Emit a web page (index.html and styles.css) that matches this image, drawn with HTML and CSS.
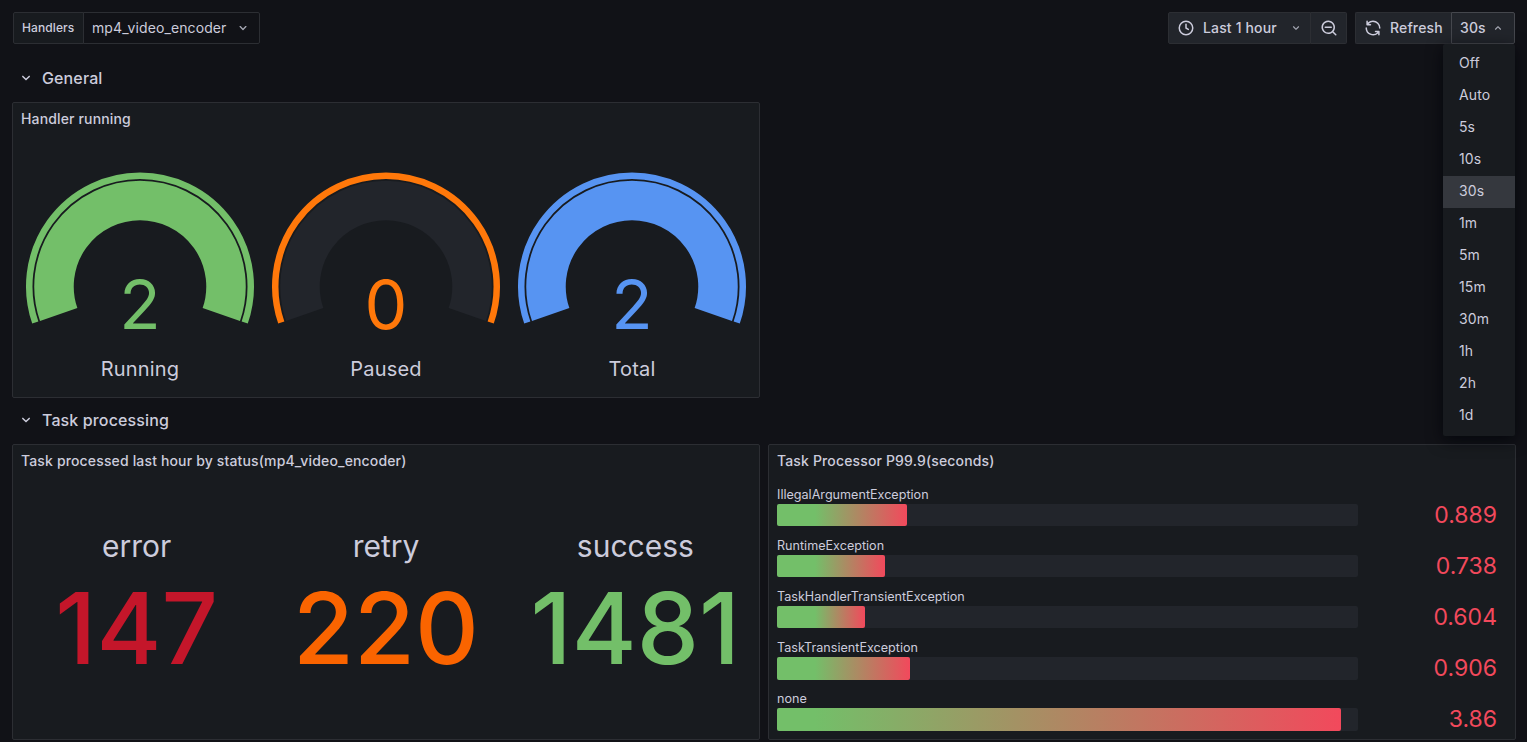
FILE: index.html
```html
<!DOCTYPE html>
<html lang="en">
<head>
<meta charset="utf-8">
<title>Handlers dashboard</title>
<link rel="stylesheet" href="styles.css">
</head>
<body>
<header class="toolbar">
  <div class="vars">
    <label class="var-label">Handlers</label>
    <div class="var-select"><span>mp4_video_encoder</span>
      <svg class="ic ic-chev ic-chev-lg" viewBox="0 0 24 24"><path d="M17,9.17a1,1,0,0,0-1.41,0L12,12.71,8.46,9.17a1,1,0,0,0-1.41,0,1,1,0,0,0,0,1.42l4.24,4.24a1,1,0,0,0,1.42,0L17,10.59A1,1,0,0,0,17,9.17Z"/></svg>
    </div>
  </div>
  <div class="actions">
    <div class="btn-group">
      <button class="btn btn-time">
        <svg class="ic" viewBox="0 0 24 24"><path d="M15.09814,12.63379,13,11.42285V7a1,1,0,0,0-2,0v5a1.00025,1.00025,0,0,0,.5.86621l3.09814,1.78809a1,1,0,0,0,1-1.73242ZM12,2A10,10,0,1,0,22,12,10.01146,10.01146,0,0,0,12,2Zm0,18a8,8,0,1,1,8-8A8.00931,8.00931,0,0,1,12,20Z"/></svg>
        <span>Last 1 hour</span>
        <svg class="ic ic-chev" viewBox="0 0 24 24"><path d="M17,9.17a1,1,0,0,0-1.41,0L12,12.71,8.46,9.17a1,1,0,0,0-1.41,0,1,1,0,0,0,0,1.42l4.24,4.24a1,1,0,0,0,1.42,0L17,10.59A1,1,0,0,0,17,9.17Z"/></svg>
      </button>
      <button class="btn btn-zoom" aria-label="Zoom out">
        <svg class="ic" viewBox="0 0 24 24"><path d="M21.71,20.29,18,16.61A9,9,0,1,0,16.61,18l3.68,3.68a1,1,0,0,0,1.42,0A1,1,0,0,0,21.71,20.29ZM11,18a7,7,0,1,1,7-7A7,7,0,0,1,11,18Zm4-8H7a1,1,0,0,0,0,2h8a1,1,0,0,0,0-2Z"/></svg>
      </button>
    </div>
    <div class="btn-group">
      <button class="btn btn-refresh">
        <svg class="ic" viewBox="0 0 24 24"><path d="M19.91,15.51H15.38a1,1,0,0,0,0,2h2.4A8,8,0,0,1,4,12a1,1,0,0,0-2,0,10,10,0,0,0,16.88,7.23V21a1,1,0,0,0,2,0V16.5A1,1,0,0,0,19.91,15.51ZM12,2A10,10,0,0,0,5.12,4.77V3a1,1,0,0,0-2,0V7.5a1,1,0,0,0,1,1h4.5a1,1,0,0,0,0-2H6.22A8,8,0,0,1,20,12a1,1,0,0,0,2,0A10,10,0,0,0,12,2Z"/></svg>
        <span>Refresh</span>
      </button>
      <button class="btn btn-interval">
        <span>30s</span>
        <svg class="ic ic-chev ic-up" viewBox="0 0 24 24"><path d="M17,9.17a1,1,0,0,0-1.41,0L12,12.71,8.46,9.17a1,1,0,0,0-1.41,0,1,1,0,0,0,0,1.42l4.24,4.24a1,1,0,0,0,1.42,0L17,10.59A1,1,0,0,0,17,9.17Z"/></svg>
      </button>
    </div>
    <ul class="menu">
      <li>Off</li><li>Auto</li><li>5s</li><li>10s</li><li class="active">30s</li><li>1m</li><li>5m</li><li>15m</li><li>30m</li><li>1h</li><li>2h</li><li>1d</li>
    </ul>
  </div>
</header>

<section class="row-title">
  <svg class="ic" viewBox="0 0 24 24"><path d="M17,9.17a1,1,0,0,0-1.41,0L12,12.71,8.46,9.17a1,1,0,0,0-1.41,0,1,1,0,0,0,0,1.42l4.24,4.24a1,1,0,0,0,1.42,0L17,10.59A1,1,0,0,0,17,9.17Z"/></svg>
  <span>General</span>
</section>
<div class="grid">
  <article class="panel">
    <h2 class="panel-title">Handler running</h2>
    <div class="gauges">
      <div class="gauge">
        <svg class="gauge-svg" viewBox="0 0 246 190">
          <path class="track fill-green" d="M41.69 148.5A86 86 0 1 1 204.31 148.5"/>
          <path class="band stroke-green" d="M18.29 156.56A110.75 110.75 0 1 1 227.71 156.56"/>
          <text class="gauge-value text-green" x="123" y="163">2</text>
        </svg>
        <div class="gauge-label">Running</div>
      </div>
      <div class="gauge">
        <svg class="gauge-svg" viewBox="0 0 246 190">
          <path class="track fill-empty" d="M41.69 148.5A86 86 0 1 1 204.31 148.5"/>
          <path class="band stroke-orange" d="M18.29 156.56A110.75 110.75 0 1 1 227.71 156.56"/>
          <text class="gauge-value text-orange" x="123" y="163">0</text>
        </svg>
        <div class="gauge-label">Paused</div>
      </div>
      <div class="gauge">
        <svg class="gauge-svg" viewBox="0 0 246 190">
          <path class="track fill-blue" d="M41.69 148.5A86 86 0 1 1 204.31 148.5"/>
          <path class="band stroke-blue" d="M18.29 156.56A110.75 110.75 0 1 1 227.71 156.56"/>
          <text class="gauge-value text-blue" x="123" y="163">2</text>
        </svg>
        <div class="gauge-label">Total</div>
      </div>
    </div>
  </article>
</div>

<section class="row-title">
  <svg class="ic" viewBox="0 0 24 24"><path d="M17,9.17a1,1,0,0,0-1.41,0L12,12.71,8.46,9.17a1,1,0,0,0-1.41,0,1,1,0,0,0,0,1.42l4.24,4.24a1,1,0,0,0,1.42,0L17,10.59A1,1,0,0,0,17,9.17Z"/></svg>
  <span>Task processing</span>
</section>
<div class="grid">
  <article class="panel">
    <h2 class="panel-title">Task processed last hour by status(mp4_video_encoder)</h2>
    <div class="stats">
      <div class="stat"><div class="stat-name">error</div><div class="stat-value text-darkred">147</div></div>
      <div class="stat"><div class="stat-name">retry</div><div class="stat-value text-darkorange">220</div></div>
      <div class="stat"><div class="stat-name">success</div><div class="stat-value text-green">1481</div></div>
    </div>
  </article>
  <article class="panel">
    <h2 class="panel-title">Task Processor P99.9(seconds)</h2>
    <div class="bars">
      <div class="bar-row"><div class="bar-label">IllegalArgumentException</div><div class="bar-track"><div class="bar-fill" style="width:130px"></div></div><div class="bar-value">0.889</div></div>
      <div class="bar-row"><div class="bar-label">RuntimeException</div><div class="bar-track"><div class="bar-fill" style="width:108px"></div></div><div class="bar-value">0.738</div></div>
      <div class="bar-row"><div class="bar-label">TaskHandlerTransientException</div><div class="bar-track"><div class="bar-fill" style="width:88px"></div></div><div class="bar-value">0.604</div></div>
      <div class="bar-row"><div class="bar-label">TaskTransientException</div><div class="bar-track"><div class="bar-fill" style="width:133px"></div></div><div class="bar-value">0.906</div></div>
      <div class="bar-row"><div class="bar-label">none</div><div class="bar-track"><div class="bar-fill" style="width:564px"></div></div><div class="bar-value">3.86</div></div>
    </div>
  </article>
</div>
</body>
</html>
```

FILE: styles.css
```css
* { box-sizing: border-box; }
html, body { height: 100%; }
body {
  margin: 0;
  padding: 12px 11px 0 12px;
  background: #111217;
  color: #ccccdc;
  font-family: Inter, "Noto Sans", sans-serif;
  overflow: hidden;
}
.ic { width: 18px; height: 18px; fill: #ccccdc; flex: none; }
.ic-chev { width: 14px; height: 14px; fill: #a5a7b3; }
.ic-chev-lg { width: 16px; height: 16px; }
.ic-up { transform: rotate(180deg); }

.toolbar { display: flex; justify-content: space-between; height: 32px; padding: 0 1px; }
.vars { display: flex; }
.var-label {
  display: flex; align-items: center; width: 71px; padding: 0 0 1px 8px;
  font-size: 12px; font-weight: 500; letter-spacing: .1px;
  background: #181b1f; border: 1px solid #2c2e33; border-radius: 2px 0 0 2px;
}
.var-select {
  display: flex; align-items: center; justify-content: space-between; width: 177px; margin-left: -1px;
  padding: 0 8px; font-size: 14px; letter-spacing: .1px; color: #ccccdc;
  background: #111217; border: 1px solid #2c2e33; border-radius: 0 2px 2px 0;
}
.var-select span, .btn span { margin-bottom: 2px; }
.actions { display: flex; gap: 8px; position: relative; }
.btn-group { display: flex; }
.btn {
  display: flex; align-items: center; height: 32px; padding: 0;
  font: 500 14px Inter, "Noto Sans", sans-serif; letter-spacing: .15px; color: #ccccdc;
  background: #22252b; border: 1px solid #2c2e33; border-radius: 2px;
}
.btn-time { width: 143px; padding-left: 8px; gap: 8px; border-radius: 2px 0 0 2px; }
.btn-time .ic-chev { margin-left: 4px; }
.btn-zoom { width: 36px; justify-content: center; border-left-width: 0; border-radius: 0 2px 2px 0; }
.btn-refresh { width: 96px; padding-left: 8px; gap: 8px; border-radius: 2px 0 0 2px; border-right-width: 0; }
.btn-interval { width: 64px; padding-left: 8px; gap: 5px; border-color: #45474d; border-radius: 0 2px 2px 0; }

.menu {
  position: absolute; top: 32px; right: 0; width: 72px; margin: 0; padding: 4px 0;
  list-style: none; background: #181b1f; border-radius: 2px;
  box-shadow: 0 4px 16px rgba(1, 4, 9, .75); z-index: 5;
}
.menu li { height: 32px; line-height: 30px; padding-left: 16px; font-size: 14px; letter-spacing: .1px; color: #ccccdc; }
.menu .active { background: #35383e; }

.row-title { display: flex; align-items: center; gap: 7px; height: 32px; margin-top: 18px; margin-bottom: 8px; padding-left: 5px; font-size: 16px; font-weight: 500; letter-spacing: .13px; }
.row-title .ic { fill: #ccccdc; }
.grid + .row-title { margin-top: 6px; }
.grid { display: grid; grid-template-columns: 748px 748px; gap: 8px; }
.panel { height: 296px; background: #181b1f; border: 1px solid #2c2e33; border-radius: 2px; }
.panel-title { margin: 0; height: 32px; padding: 0 8px; font-size: 14px; font-weight: 500; line-height: 32px; letter-spacing: .15px; color: #ccccdc; }

.gauges { display: flex; padding: 0 4px; }
.gauge { flex: 1; display: flex; flex-direction: column; align-items: center; }
.gauge-svg { display: block; width: 246px; height: 190px; margin-top: 31px; }
.gauge-label { height: 24px; margin-top: 1px; font-size: 20px; line-height: 24px; letter-spacing: .2px; color: #ccccdc; }
.track { fill: none; stroke-width: 39.5; }
.band { fill: none; stroke-width: 6.5; }
.gauge-value { font: 400 68px Inter, sans-serif; text-anchor: middle; }
.fill-green { stroke: #73bf69; }
.fill-blue { stroke: #5794f2; }
.fill-empty { stroke: #22252b; }
.stroke-green { stroke: #73bf69; }
.stroke-orange { stroke: #ff780a; }
.stroke-blue { stroke: #5794f2; }
.text-green { fill: #73bf69; color: #73bf69; }
.text-orange { fill: #ff780a; }
.text-blue { fill: #5794f2; }
.text-darkred { color: #c4162a; }
.text-darkorange { color: #fa6400; }

.stats { display: flex; margin: 0 -1px; padding-top: 49px; }
.stat { flex: 1; text-align: center; }
.stat-name { font-size: 30px; line-height: 40px; }
.stat-value { margin-top: 2px; font-size: 99px; font-weight: 500; line-height: 120px; }

.bars { display: flex; flex-direction: column; gap: 11.8px; padding: 10px 18px 0 8px; }
.bar-row { display: grid; grid-template-columns: 581px 1fr; grid-template-rows: 17px 22.3px; }
.bar-label { grid-column: 1; font-size: 12.6px; line-height: 15.5px; }
.bar-track { grid-column: 1; grid-row: 2; background: #22252b; border-radius: 2px; }
.bar-fill { height: 100%; border-radius: 2px; background: linear-gradient(90deg, #73bf69 38px, #f2495c 100%); }
.bar-value { grid-column: 2; grid-row: 2; text-align: right; font-size: 23px; line-height: 22px; color: #f2495c; }
```
